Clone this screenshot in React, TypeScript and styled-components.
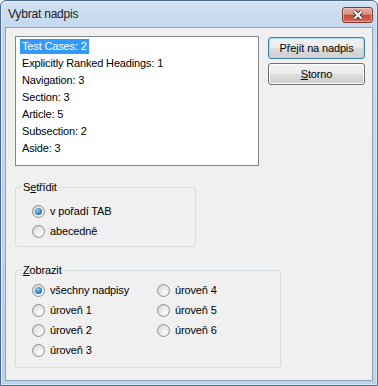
import React from 'react';
import styled, { createGlobalStyle } from 'styled-components';

const GlobalStyle = createGlobalStyle`
  html, body {
    margin: 0;
    padding: 0;
    background: #ffffff;
  }
  body {
    font-family: "Liberation Sans", Tahoma, Arial, sans-serif;
    font-size: 11px;
    letter-spacing: -0.15px;
    color: #000;
  }
`;

const Window = styled.div`
  box-sizing: border-box;
  width: 378px;
  height: 386px;
  display: flex;
  flex-direction: column;
  padding: 0 4px 4px;
  border: 1px solid #4a6a90;
  border-radius: 6px 6px 0 0;
  background: linear-gradient(to bottom, #d3e2f4 0px, #c4d7ee 26px, #bed3eb 100%);
  box-shadow: inset 0 0 0 1px rgba(255, 255, 255, 0.45);
`;

const TitleBar = styled.div`
  height: 26px;
  flex-shrink: 0;
  display: flex;
  justify-content: space-between;
  align-items: flex-start;
`;

const Title = styled.div`
  font-size: 12px;
  line-height: 26px;
  padding-left: 3px;
  letter-spacing: -0.2px;
  color: #1b1b1b;
`;

const CloseButton = styled.div`
  box-sizing: border-box;
  width: 31px;
  height: 16px;
  margin-top: 6px;
  display: flex;
  align-items: center;
  justify-content: center;
  border: 1px solid #7a3a33;
  border-radius: 3px;
  background: linear-gradient(to bottom, #e6aba2 0%, #d99085 45%, #c5483a 52%, #d46c5e 100%);
  box-shadow: inset 0 0 0 1px rgba(255, 220, 210, 0.5);
`;

const Client = styled.div`
  flex: 1;
  background: #f0f0f0;
  border: 1px solid #8da2bd;
  padding: 8px 0 0 9px;
  display: flex;
  flex-direction: column;
  align-items: flex-start;
`;

const TopRow = styled.div`
  display: flex;
  gap: 9px;
  align-items: flex-start;
`;

const ListBox = styled.div`
  box-sizing: border-box;
  width: 244px;
  height: 130px;
  border: 1px solid #828790;
  background: #ffffff;
  padding: 2px 4px;
`;

const ListItem = styled.div`
  height: 17px;
`;

const ItemLabel = styled.span<{ $selected?: boolean }>`
  display: inline-block;
  line-height: 15px;
  padding: 0 2px;
  color: ${p => (p.$selected ? '#ffffff' : '#000000')};
  background: ${p => (p.$selected ? '#3399ff' : 'transparent')};
`;

const ButtonColumn = styled.div`
  display: flex;
  flex-direction: column;
  gap: 4px;
  margin-top: 1px;
`;

const Button = styled.button<{ $default?: boolean }>`
  box-sizing: border-box;
  width: 97px;
  height: 22px;
  padding: 0;
  font-family: inherit;
  font-size: 11px;
  letter-spacing: inherit;
  color: #000;
  border: 1px solid ${p => (p.$default ? '#3c7fb1' : '#707070')};
  border-radius: 3px;
  background: linear-gradient(to bottom, #f2f2f2 0%, #ebebeb 50%, #dddddd 50%, #cfcfcf 100%);
  box-shadow: inset 0 0 0 1px ${p => (p.$default ? '#a8dbf5' : '#fbfbfb')};
`;

const Accel = styled.span`
  text-decoration: underline;
  text-underline-offset: 1px;
`;

const Group = styled.fieldset<{ $width: number; $gap: number }>`
  box-sizing: border-box;
  width: ${p => p.$width}px;
  min-width: 0;
  margin: ${p => p.$gap}px 0 0;
  padding: 0;
  border: 1px solid #d5dfe5;
  border-radius: 3px;
`;

const Legend = styled.legend`
  margin-left: 6px;
  padding: 0 1px;
  line-height: 14px;
`;

const Options = styled.div<{ $top: number; $bottom: number }>`
  padding: ${p => p.$top}px 0 ${p => p.$bottom}px 16px;
`;

const OptionGrid = styled(Options)`
  display: grid;
  grid-template-columns: 125px auto;
  grid-template-rows: repeat(4, 20px);
  grid-auto-flow: column;
`;

const OptionRow = styled.label`
  display: flex;
  align-items: center;
  gap: 5px;
  height: 20px;
`;

const Radio = styled.span<{ $checked?: boolean }>`
  position: relative;
  box-sizing: border-box;
  width: 13px;
  height: 13px;
  flex-shrink: 0;
  border-radius: 50%;
  border: 1px solid #8e8f8f;
  background: radial-gradient(circle at 70% 70%, #fdfdfd 0%, #e6e6e6 55%, #cbcbcb 100%);

  &::after {
    content: '';
    display: ${p => (p.$checked ? 'block' : 'none')};
    position: absolute;
    left: 2px;
    top: 2px;
    width: 7px;
    height: 7px;
    border-radius: 50%;
    background: radial-gradient(circle at 40% 35%, #9ad6ff 0%, #3f8fd2 45%, #1b4b7e 100%);
  }
`;

const items = [
  'Test Cases: 2',
  'Explicitly Ranked Headings: 1',
  'Navigation: 3',
  'Section: 3',
  'Article: 5',
  'Subsection: 2',
  'Aside: 3',
];

const levels = ['všechny nadpisy', 'úroveň 1', 'úroveň 2', 'úroveň 3', 'úroveň 4', 'úroveň 5', 'úroveň 6'];

const App: React.FC = () => {
  return (
    <>
      <GlobalStyle />
      <Window>
        <TitleBar>
          <Title>Vybrat nadpis</Title>
          <CloseButton>
            <svg width="12" height="10" viewBox="0 0 12 10">
              <path d="M2.5 1.5 L9.5 8.5 M9.5 1.5 L2.5 8.5" stroke="#3d3d3d" strokeWidth="4" />
              <path d="M2.5 1.5 L9.5 8.5 M9.5 1.5 L2.5 8.5" stroke="#ffffff" strokeWidth="2" />
            </svg>
          </CloseButton>
        </TitleBar>
        <Client>
          <TopRow>
            <ListBox>
              {items.map((item, i) => (
                <ListItem key={item}>
                  <ItemLabel $selected={i === 0}>{item}</ItemLabel>
                </ListItem>
              ))}
            </ListBox>
            <ButtonColumn>
              <Button $default>Přejít na nadpis</Button>
              <Button>
                <Accel>S</Accel>torno
              </Button>
            </ButtonColumn>
          </TopRow>

          <Group $width={181} $gap={14}>
            <Legend>
              S<Accel>e</Accel>třídit
            </Legend>
            <Options $top={7} $bottom={5}>
              <OptionRow>
                <Radio $checked />
                v pořadí TAB
              </OptionRow>
              <OptionRow>
                <Radio />
                abecedně
              </OptionRow>
            </Options>
          </Group>

          <Group $width={266} $gap={16}>
            <Legend>
              <Accel>Z</Accel>obrazit
            </Legend>
            <OptionGrid $top={3} $bottom={7}>
              {levels.map((level, i) => (
                <OptionRow key={level}>
                  <Radio $checked={i === 0} />
                  {level}
                </OptionRow>
              ))}
            </OptionGrid>
          </Group>
        </Client>
      </Window>
    </>
  );
};

export default App;
